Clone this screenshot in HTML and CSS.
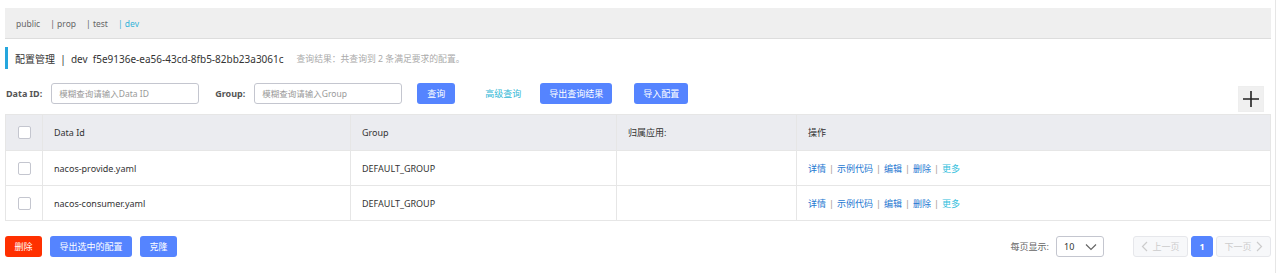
FILE: index.html
```html
<!DOCTYPE html>
<html lang="zh-CN">

<head>
    <meta charset="UTF-8">
    <meta name="viewport" content="width=device-width, initial-scale=1.0">
    <title>配置管理</title>
    <link rel="stylesheet" href="styles.css">
</head>

<body>
    <div class="page">
        <div class="namespace-bar">
            <span class="ns">public</span>
            <span class="ns">| prop</span>
            <span class="ns">| test</span>
            <span class="ns active">| dev</span>
        </div>

        <div class="title">
            <span class="title-main">配置管理 &nbsp;|&nbsp; dev &nbsp;f5e9136e-ea56-43cd-8fb5-82bb23a3061c</span>
            <span class="title-sub">查询结果：共查询到 2 条满足要求的配置。</span>
        </div>

        <div class="toolbar">
            <div class="search">
                <label class="field-label">Data ID:</label>
                <input class="field" type="text" placeholder="模糊查询请输入Data ID">
                <label class="field-label group-label">Group:</label>
                <input class="field" type="text" placeholder="模糊查询请输入Group">
                <button class="btn btn-primary btn-query">查询</button>
                <a href="#" class="adv-link">高级查询</a>
                <button class="btn btn-primary btn-export">导出查询结果</button>
                <button class="btn btn-primary btn-import">导入配置</button>
            </div>
            <button class="btn-add">
                <svg width="18" height="18" viewBox="0 0 18 18">
                    <path d="M9 1v16M1 9h16" stroke="#222" stroke-width="1.6" fill="none" />
                </svg>
            </button>
        </div>

        <table class="config-table">
            <thead>
                <tr>
                    <th class="col-check"><span class="checkbox"></span></th>
                    <th class="col-id">Data Id</th>
                    <th class="col-group">Group</th>
                    <th class="col-app">归属应用:</th>
                    <th>操作</th>
                </tr>
            </thead>
            <tbody>
                <tr>
                    <td class="col-check"><span class="checkbox"></span></td>
                    <td>nacos-provide.yaml</td>
                    <td>DEFAULT_GROUP</td>
                    <td></td>
                    <td class="actions">
                        <a href="#">详情</a><span class="sep">|</span><a href="#">示例代码</a><span class="sep">|</span><a href="#">编辑</a><span class="sep">|</span><a href="#">删除</a><span class="sep">|</span><a href="#" class="more">更多</a>
                    </td>
                </tr>
                <tr>
                    <td class="col-check"><span class="checkbox"></span></td>
                    <td>nacos-consumer.yaml</td>
                    <td>DEFAULT_GROUP</td>
                    <td></td>
                    <td class="actions">
                        <a href="#">详情</a><span class="sep">|</span><a href="#">示例代码</a><span class="sep">|</span><a href="#">编辑</a><span class="sep">|</span><a href="#">删除</a><span class="sep">|</span><a href="#" class="more">更多</a>
                    </td>
                </tr>
            </tbody>
        </table>

        <div class="footer">
            <div class="bulk">
                <button class="btn btn-danger">删除</button>
                <button class="btn btn-primary">导出选中的配置</button>
                <button class="btn btn-primary">克隆</button>
            </div>
            <div class="pager">
                <span class="pager-label">每页显示:</span>
                <div class="page-size">
                    <span>10</span>
                    <svg width="12" height="8" viewBox="0 0 12 8">
                        <path d="M1 1.5l5 5 5-5" stroke="#666" stroke-width="1.2" fill="none" />
                    </svg>
                </div>
                <button class="page-btn disabled page-prev">
                    <svg width="7" height="11" viewBox="0 0 7 11"><path d="M6 1L1.5 5.5 6 10" stroke="#ccc" stroke-width="1.2" fill="none" /></svg>
                    <span>上一页</span>
                </button>
                <button class="page-btn current">1</button>
                <button class="page-btn disabled page-next">
                    <span>下一页</span>
                    <svg width="7" height="11" viewBox="0 0 7 11"><path d="M1 1l4.5 4.5L1 10" stroke="#ccc" stroke-width="1.2" fill="none" /></svg>
                </button>
            </div>
        </div>
    </div>
</body>

</html>
```

FILE: styles.css
```css
* {
    box-sizing: border-box;
}

body {
    margin: 0;
    font-family: "Noto Sans", "Noto Sans CJK SC", sans-serif;
    font-size: 9px;
    color: #333;
    background: #fff;
}

.page {
    width: 1276px;
    min-height: 273px;
    padding: 8px 4px 0 5px;
    border-right: 1px solid #e6e6e6;
}

.namespace-bar {
    height: 31px;
    padding-left: 11px;
    display: flex;
    align-items: center;
    background: #efefef;
    border-bottom: 1px solid #ddd;
    color: #666;
    font-size: 8.5px;
}

.ns {
    margin-right: 10px;
}

.ns.active {
    color: #33b3d9;
}

.title {
    margin-top: 8px;
    height: 22px;
    padding-left: 7px;
    display: flex;
    align-items: center;
    border-left: 3px solid #25a6dd;
}

.title-main {
    font-size: 10px;
    color: #333;
}

.title-sub {
    margin-left: 13px;
    font-size: 8.8px;
    color: #aaa;
}

.toolbar {
    margin-top: 14px;
    height: 31px;
    display: flex;
    justify-content: space-between;
    align-items: flex-start;
}

.search {
    display: flex;
    align-items: center;
    height: 21px;
}

.field-label {
    font-weight: bold;
    color: #555;
    margin-left: 1px;
    margin-right: 9px;
}

.group-label {
    margin-left: 16px;
}

.field {
    width: 148px;
    height: 21px;
    padding: 0 7px;
    border: 1px solid #c4c6cf;
    border-radius: 3px;
    font-family: inherit;
    font-size: 8.5px;
}

.field::placeholder {
    color: #999;
}

.btn {
    height: 21px;
    padding: 0 9.5px;
    border: none;
    border-radius: 3px;
    font-family: inherit;
    font-size: 9px;
    color: #fff;
    cursor: pointer;
}

.btn-primary {
    background: #5584ff;
}

.btn-danger {
    background: #ff3000;
}

.btn-query {
    margin-left: 15px;
    padding: 0 10px;
}

.adv-link {
    margin-left: 30px;
    color: #33b8d6;
    font-size: 9px;
    text-decoration: none;
}

.btn-export {
    margin-left: 19px;
    padding: 0 9px;
}

.btn-import {
    margin-left: 22px;
    padding: 0 9px;
}

.btn-add {
    margin-top: 3px;
    margin-right: 7px;
    width: 26px;
    height: 26px;
    padding: 0;
    display: flex;
    align-items: center;
    justify-content: center;
    border: 1px solid #eee;
    background: #f0f0f0;
}

.config-table {
    width: 100%;
    border-collapse: collapse;
    border: 1px solid #e6e6e6;
}

.config-table th,
.config-table td {
    height: 36px;
    padding: 0 11px;
    text-align: left;
    font-weight: normal;
    font-size: 9px;
    border-bottom: 1px solid #e6e6e6;
    border-left: 1px solid #e6e6e6;
}

.config-table th {
    background: #ebecf0;
    color: #333;
}

.config-table td {
    height: 35px;
}

.config-table .col-check {
    width: 37px;
    padding-left: 12px;
}

.col-id {
    width: 308px;
}

.col-group {
    width: 266px;
}

.col-app {
    width: 180px;
}

.checkbox {
    display: block;
    width: 13px;
    height: 13px;
    border: 1px solid #c4c6cf;
    border-radius: 2px;
    background: #fff;
}

.actions a {
    color: #2477d1;
    text-decoration: none;
}

.actions a.more {
    color: #33c0dd;
}

.sep {
    margin: 0 3px;
    color: #a89a8a;
}

.footer {
    margin-top: 15px;
    display: flex;
    justify-content: space-between;
    align-items: center;
}

.bulk {
    display: flex;
    gap: 8px;
}

.pager {
    display: flex;
    align-items: center;
}

.pager-label {
    color: #666;
    margin-right: 7px;
}

.page-size {
    width: 48px;
    height: 21px;
    padding: 0 6px 0 7px;
    display: flex;
    align-items: center;
    justify-content: space-between;
    border: 1px solid #c4c6cf;
    border-radius: 3px;
    margin-right: 29px;
}

.page-btn {
    height: 21px;
    display: flex;
    align-items: center;
    justify-content: center;
    gap: 4px;
    padding: 0;
    border: 1px solid #e6e7eb;
    border-radius: 3px;
    background: #f7f8fa;
    font-family: inherit;
    font-size: 9px;
    color: #ccc;
    white-space: nowrap;
}

.page-prev,
.page-next {
    width: 55px;
}

.page-btn.current {
    margin: 0 3px;
    width: 22px;
    background: #5584ff;
    border-color: #5584ff;
    color: #fff;
    font-weight: bold;
}
```
